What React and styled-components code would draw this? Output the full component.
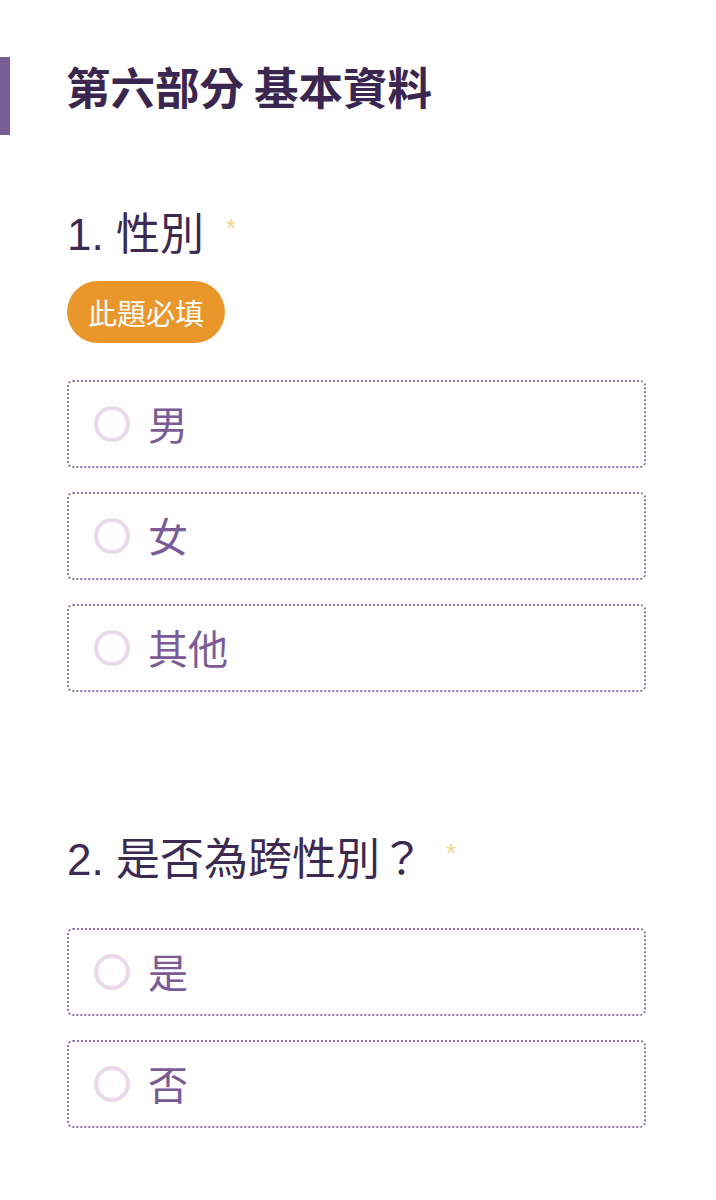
import styled, {createGlobalStyle} from "styled-components"

const GlobalStyle = createGlobalStyle`
  body {
    margin: 0;
    background: #ffffff;
    font-family: "Liberation Sans", "Noto Sans CJK TC", sans-serif;
  }
`

// Section title with the purple bar on its left
const SectionHeader = styled.header`
  display: flex;
  align-items: flex-start;
  height: 78px;
  margin-top: 57px;
  padding-top: 3px;
  box-sizing: border-box;
  border-left: 10px solid #7a5c94;
  padding-left: 56px;
`

const SectionTitle = styled.h1`
  margin: 0;
  font-family: "Noto Sans CJK TC", sans-serif;
  font-size: 44.5px;
  line-height: 52px;
  font-weight: 700;
  color: #3b2650;
`

const Form = styled.main`
  padding: 0 70px 0 67px;
`

const Question = styled.section`
  margin-top: ${(p) => p.$top}px;
`

const QuestionTitle = styled.h2`
  display: flex;
  align-items: flex-start;
  margin: 0;
  font-size: 44px;
  line-height: 52px;
  font-weight: 400;
  color: #3d2a52;
`

const Required = styled.span`
  margin-left: 22px;
  margin-top: 6px;
  font-size: 26px;
  line-height: 26px;
  color: #f5d58c;
`

const Badge = styled.div`
  display: inline-flex;
  align-items: center;
  height: 62px;
  margin-top: 20px;
  padding: 0 21px;
  border-radius: 31px;
  background: #e9962b;
  color: #ffffff;
  font-size: 29px;
`

const Options = styled.div`
  display: flex;
  flex-direction: column;
  gap: 24px;
  margin-top: ${(p) => p.$top}px;
`

const Option = styled.label`
  display: flex;
  align-items: center;
  gap: 18px;
  height: 88px;
  box-sizing: border-box;
  padding-left: 25px;
  border: 2px dotted #8e74a8;
  border-radius: 6px;
  cursor: pointer;
`

const Radio = styled.span`
  width: 36px;
  height: 36px;
  box-sizing: border-box;
  border: 4px solid #ead9ea;
  border-radius: 50%;
`

const OptionText = styled.span`
  font-size: 40px;
  margin-top: -2px;
  color: #7b5b97;
`

const questions = [
  {title: "1. 性別", badge: "此題必填", top: 74, options: ["男", "女", "其他"]},
  {title: "2. 是否為跨性別？", top: 142, options: ["是", "否"]},
]

const App = () => {
  return (
    <>
      <GlobalStyle />
      <SectionHeader>
        <SectionTitle>第六部分 基本資料</SectionTitle>
      </SectionHeader>
      <Form>
        {questions.map((q) => (
          <Question key={q.title} $top={q.top}>
            <QuestionTitle>
              {q.title}
              <Required>*</Required>
            </QuestionTitle>
            {q.badge && <Badge>{q.badge}</Badge>}
            <Options $top={q.badge ? 37 : 42}>
              {q.options.map((o) => (
                <Option key={o}>
                  <Radio />
                  <OptionText>{o}</OptionText>
                </Option>
              ))}
            </Options>
          </Question>
        ))}
      </Form>
    </>
  )
}

export default App
